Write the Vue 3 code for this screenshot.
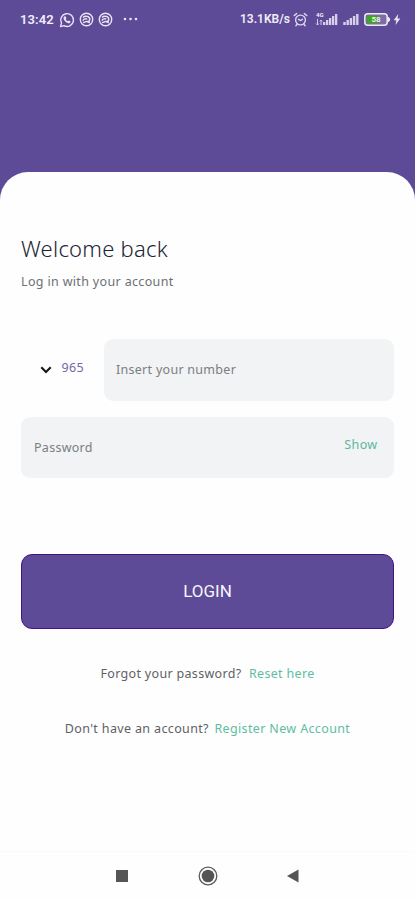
<script setup>
import { ref } from 'vue'

const phone = ref('')
const password = ref('')
const visible = ref(false)
const bars = [3, 5, 7, 9, 11]
</script>

<template>
  <div class="screen">
    <header class="status">
      <span class="time">13:42</span>
      <svg class="whatsapp" width="16" height="16" viewBox="0 0 16 16">
        <path d="M1.500 14.600l1-3.500A6.400 6.400 0 1 1 5 13.600z" fill="none" stroke="#e9e4f4" stroke-width="1.400" stroke-linejoin="round" />
        <path d="M5.500 4.300l1.200.2.7 1.800-.7.9c.5 1 1.200 1.600 2.200 2.100l.9-.8 1.800.9c0 1.300-1 1.900-2 1.800C6.900 10.800 4.600 8.200 4.500 6c0-.8.4-1.400 1-1.700z" fill="#e9e4f4" />
      </svg>
      <svg v-for="n in 2" :key="n" class="swirl" width="15" height="15" viewBox="0 0 15 15">
        <circle cx="7.500" cy="7.500" r="6.200" fill="none" stroke="#e9e4f4" stroke-width="1.400" />
        <path d="M4 5.400C5.500 3.700 9.300 3.700 10.300 5.700S10.500 9.800 8.600 9.300M3.800 8.700c1-2 3.500-2.400 4.300-1.300M4 10.600c2 0 2.600-1.300 4-1.200s1.700 1.300 3 1.200" fill="none" stroke="#e9e4f4" stroke-width="1.500" />
      </svg>
      <svg class="dots" width="15" height="4" viewBox="0 0 15 4">
        <circle cx="2" cy="2" r="1.300" fill="#e9e4f4" />
        <circle cx="7.500" cy="2" r="1.300" fill="#e9e4f4" />
        <circle cx="13" cy="2" r="1.300" fill="#e9e4f4" />
      </svg>
      <span class="speed">13.1KB/s</span>
      <svg class="alarm" width="15" height="15" viewBox="0 0 15 15">
        <g fill="none" stroke="#dcd5ec" stroke-width="1.400" stroke-linecap="round">
          <circle cx="7.500" cy="8" r="4.900" />
          <path d="M1.200 3.600l2.500-2.100M13.800 3.600l-2.500-2.100M5.500 7.300l2 1.200 2-1.200M4 12.300l-1.100 1.400M11 12.300l1.100 1.400" />
        </g>
      </svg>
      <div class="network">
        <span class="gen">4G</span>
        <svg width="23" height="13" viewBox="0 0 23 13">
          <path d="M2.500 6v6M1 10.500L2.500 12 4 10.500M6 12V7M4.700 8.400L6 7l1.300 1.400" fill="none" stroke="#d3cae7" stroke-width="1" />
          <rect v-for="(h, i) in bars" :key="h" :x="8 + i * 3" :y="12 - h" width="2.300" :height="h" fill="#d8d0ea" />
        </svg>
      </div>
      <svg class="signal" width="16" height="13" viewBox="0 0 16 13">
        <rect v-for="(h, i) in bars" :key="h" :x="i * 3.200 + 0.300" :y="12 - h" width="2.400" :height="h" fill="#d8d0ea" />
      </svg>
      <div class="battery">
        <svg width="27" height="13" viewBox="0 0 27 13">
          <rect x=".8" y=".8" width="22.400" height="11.400" rx="3" fill="#7b6ea5" stroke="#eeeaf5" stroke-width="1.500" />
          <rect x="2.800" y="2.800" width="11.500" height="7.400" rx="1" fill="#3da61e" />
          <path d="M23.500 3.500q2.700 1 2.700 3t-2.700 3z" fill="#eeeaf5" />
        </svg>
        <span class="charge">58</span>
      </div>
      <svg class="bolt" width="8" height="13" viewBox="0 0 8 13">
        <path d="M5.300 1L.7 7.200h2.600L2.500 12 7.300 5.500H4.500z" fill="#e9e4f4" />
      </svg>
    </header>

    <main class="sheet">
      <h1>Welcome back</h1>
      <p class="subtitle">Log in with your account</p>

      <form @submit.prevent>
        <div class="phone-row">
          <button type="button" class="country">
            <svg width="12" height="8" viewBox="0 0 12 8">
              <path d="M1.300 1.300L6 6l4.700-4.700" fill="none" stroke="#161616" stroke-width="2.100" />
            </svg>
            <span>965</span>
          </button>
          <label class="field number"><input v-model="phone" type="tel" placeholder="Insert your number" /></label>
        </div>
        <div class="field secret">
          <input v-model="password" :type="visible ? 'text' : 'password'" placeholder="Password" />
          <button type="button" class="show" @click="visible = !visible">Show</button>
        </div>
        <button class="login">LOGIN</button>
      </form>

      <p class="hint forgot"><span>Forgot your password?</span><a>Reset here</a></p>
      <p class="hint register"><span>Don't have an account?</span><a>Register New Account</a></p>
    </main>

    <nav class="navbar">
      <svg width="12" height="12" viewBox="0 0 12 12"><rect width="12" height="12" fill="#555" /></svg>
      <svg width="20" height="20" viewBox="0 0 20 20">
        <circle cx="10" cy="10" r="8.800" fill="none" stroke="#5b5b5b" stroke-width="1.300" />
        <circle cx="10" cy="10" r="6.300" fill="#555" />
      </svg>
      <svg width="12" height="14" viewBox="0 0 12 14"><path d="M0 7L11.500.5v13z" fill="#555" /></svg>
    </nav>
  </div>
</template>

<style>
body {
  background: #5d4b97;
}
</style>

<style scoped>
* {
  box-sizing: border-box;
}
.screen {
  width: 415px;
  height: 900px;
  display: flex;
  flex-direction: column;
  overflow: hidden;
  background: #5d4b97;
  font-family: "Noto Sans", sans-serif;
}
.status {
  height: 171.500px;
  flex: none;
  display: flex;
  align-items: flex-start;
  padding: 12px 14px 0 20px;
  color: #f1edf8;
  font-family: Roboto, sans-serif;
}
.status svg {
  display: block;
  flex: none;
}
.time,
.speed {
  flex: none;
  font-weight: 600;
  line-height: 15px;
  white-space: nowrap;
}
.time {
  width: 39px;
  font-size: 13px;
  letter-spacing: 0.100px;
}
.swirl {
  margin-left: 4px;
}
.dots {
  margin: 5px 0 0 10px;
}
.speed {
  width: 52px;
  margin: 0 1px 0 auto;
  font-size: 12px;
}
.network {
  position: relative;
  margin-left: 7px;
}
.gen {
  position: absolute;
  left: 1px;
  top: -1px;
  font-size: 6px;
  line-height: 7px;
  font-weight: 700;
}
.network svg {
  margin-top: 1px;
}
.signal {
  margin: 1px 0 0 5px;
}
.battery {
  position: relative;
  margin: 1px 0 0 5px;
}
.charge {
  position: absolute;
  left: 0;
  top: 2px;
  width: 24px;
  text-align: center;
  font-size: 8px;
  line-height: 9px;
  font-weight: 700;
}
.status .bolt {
  margin: 1px 0 0 2px;
}
.sheet {
  height: 679.500px;
  flex: none;
  padding: 63.500px 21px 0;
  border-radius: 28px 28px 0 0;
  background: #fefefe;
}
h1,
p {
  margin: 0;
}
h1 {
  height: 30px;
  font-size: 22px;
  font-weight: 300;
  line-height: 27px;
  letter-spacing: 0.250px;
  color: #1c2431;
}
.subtitle {
  margin-top: 8px;
  height: 18px;
  font-size: 12.500px;
  line-height: 18px;
  letter-spacing: 0.340px;
  color: #6d7074;
}
form {
  margin-top: 48px;
}
button,
input {
  margin: 0;
  padding: 0;
  border: 0;
  outline: 0;
  background: none;
  font-family: inherit;
}
.phone-row {
  display: flex;
  justify-content: space-between;
  height: 62px;
}
.country {
  width: 83px;
  height: 56px;
  display: flex;
  align-items: center;
  padding-left: 18.500px;
  font-size: 12.500px;
  letter-spacing: 0.300px;
  color: #7366a5;
}
.country svg {
  margin: 6px 10px 0 0;
}
.field {
  display: flex;
  border-radius: 9px;
  background: #f1f3f5;
}
.field input {
  min-width: 0;
  flex: 1;
  font-size: 12.500px;
  letter-spacing: 0.280px;
  color: #6f7276;
}
.field input::placeholder {
  color: #7b7e82;
  opacity: 1;
}
.number {
  width: 290px;
  padding: 0 12px 2px;
}
.secret {
  height: 61px;
  margin-top: 16px;
  padding: 0 16.500px 0 13px;
}
.show {
  height: 54px;
  font-size: 12.500px;
  letter-spacing: 0.350px;
  color: #5fb79f;
}
.login {
  display: block;
  width: 373px;
  height: 75px;
  margin-top: 76px;
  padding-bottom: 2px;
  border: 1px solid #3e1587;
  border-radius: 11px;
  background: #5d4b97;
  font-family: Roboto, sans-serif;
  font-size: 17px;
  color: #f7f5fb;
}
.hint {
  display: flex;
  justify-content: center;
  height: 18px;
  font-size: 12.500px;
  line-height: 18px;
  letter-spacing: 0.320px;
  white-space: nowrap;
  color: #5e6165;
}
.hint a {
  color: #61bda2;
}
.forgot {
  margin-top: 36px;
  gap: 7.500px;
}
.register {
  margin-top: 37px;
  gap: 5.500px;
  letter-spacing: 0.360px;
}
.navbar {
  height: 49px;
  flex: none;
  display: flex;
  align-items: center;
  justify-content: space-between;
  padding: 0 116px 1px;
  border-top: 1px solid #fafafa;
  background: #fefefe;
}
</style>
